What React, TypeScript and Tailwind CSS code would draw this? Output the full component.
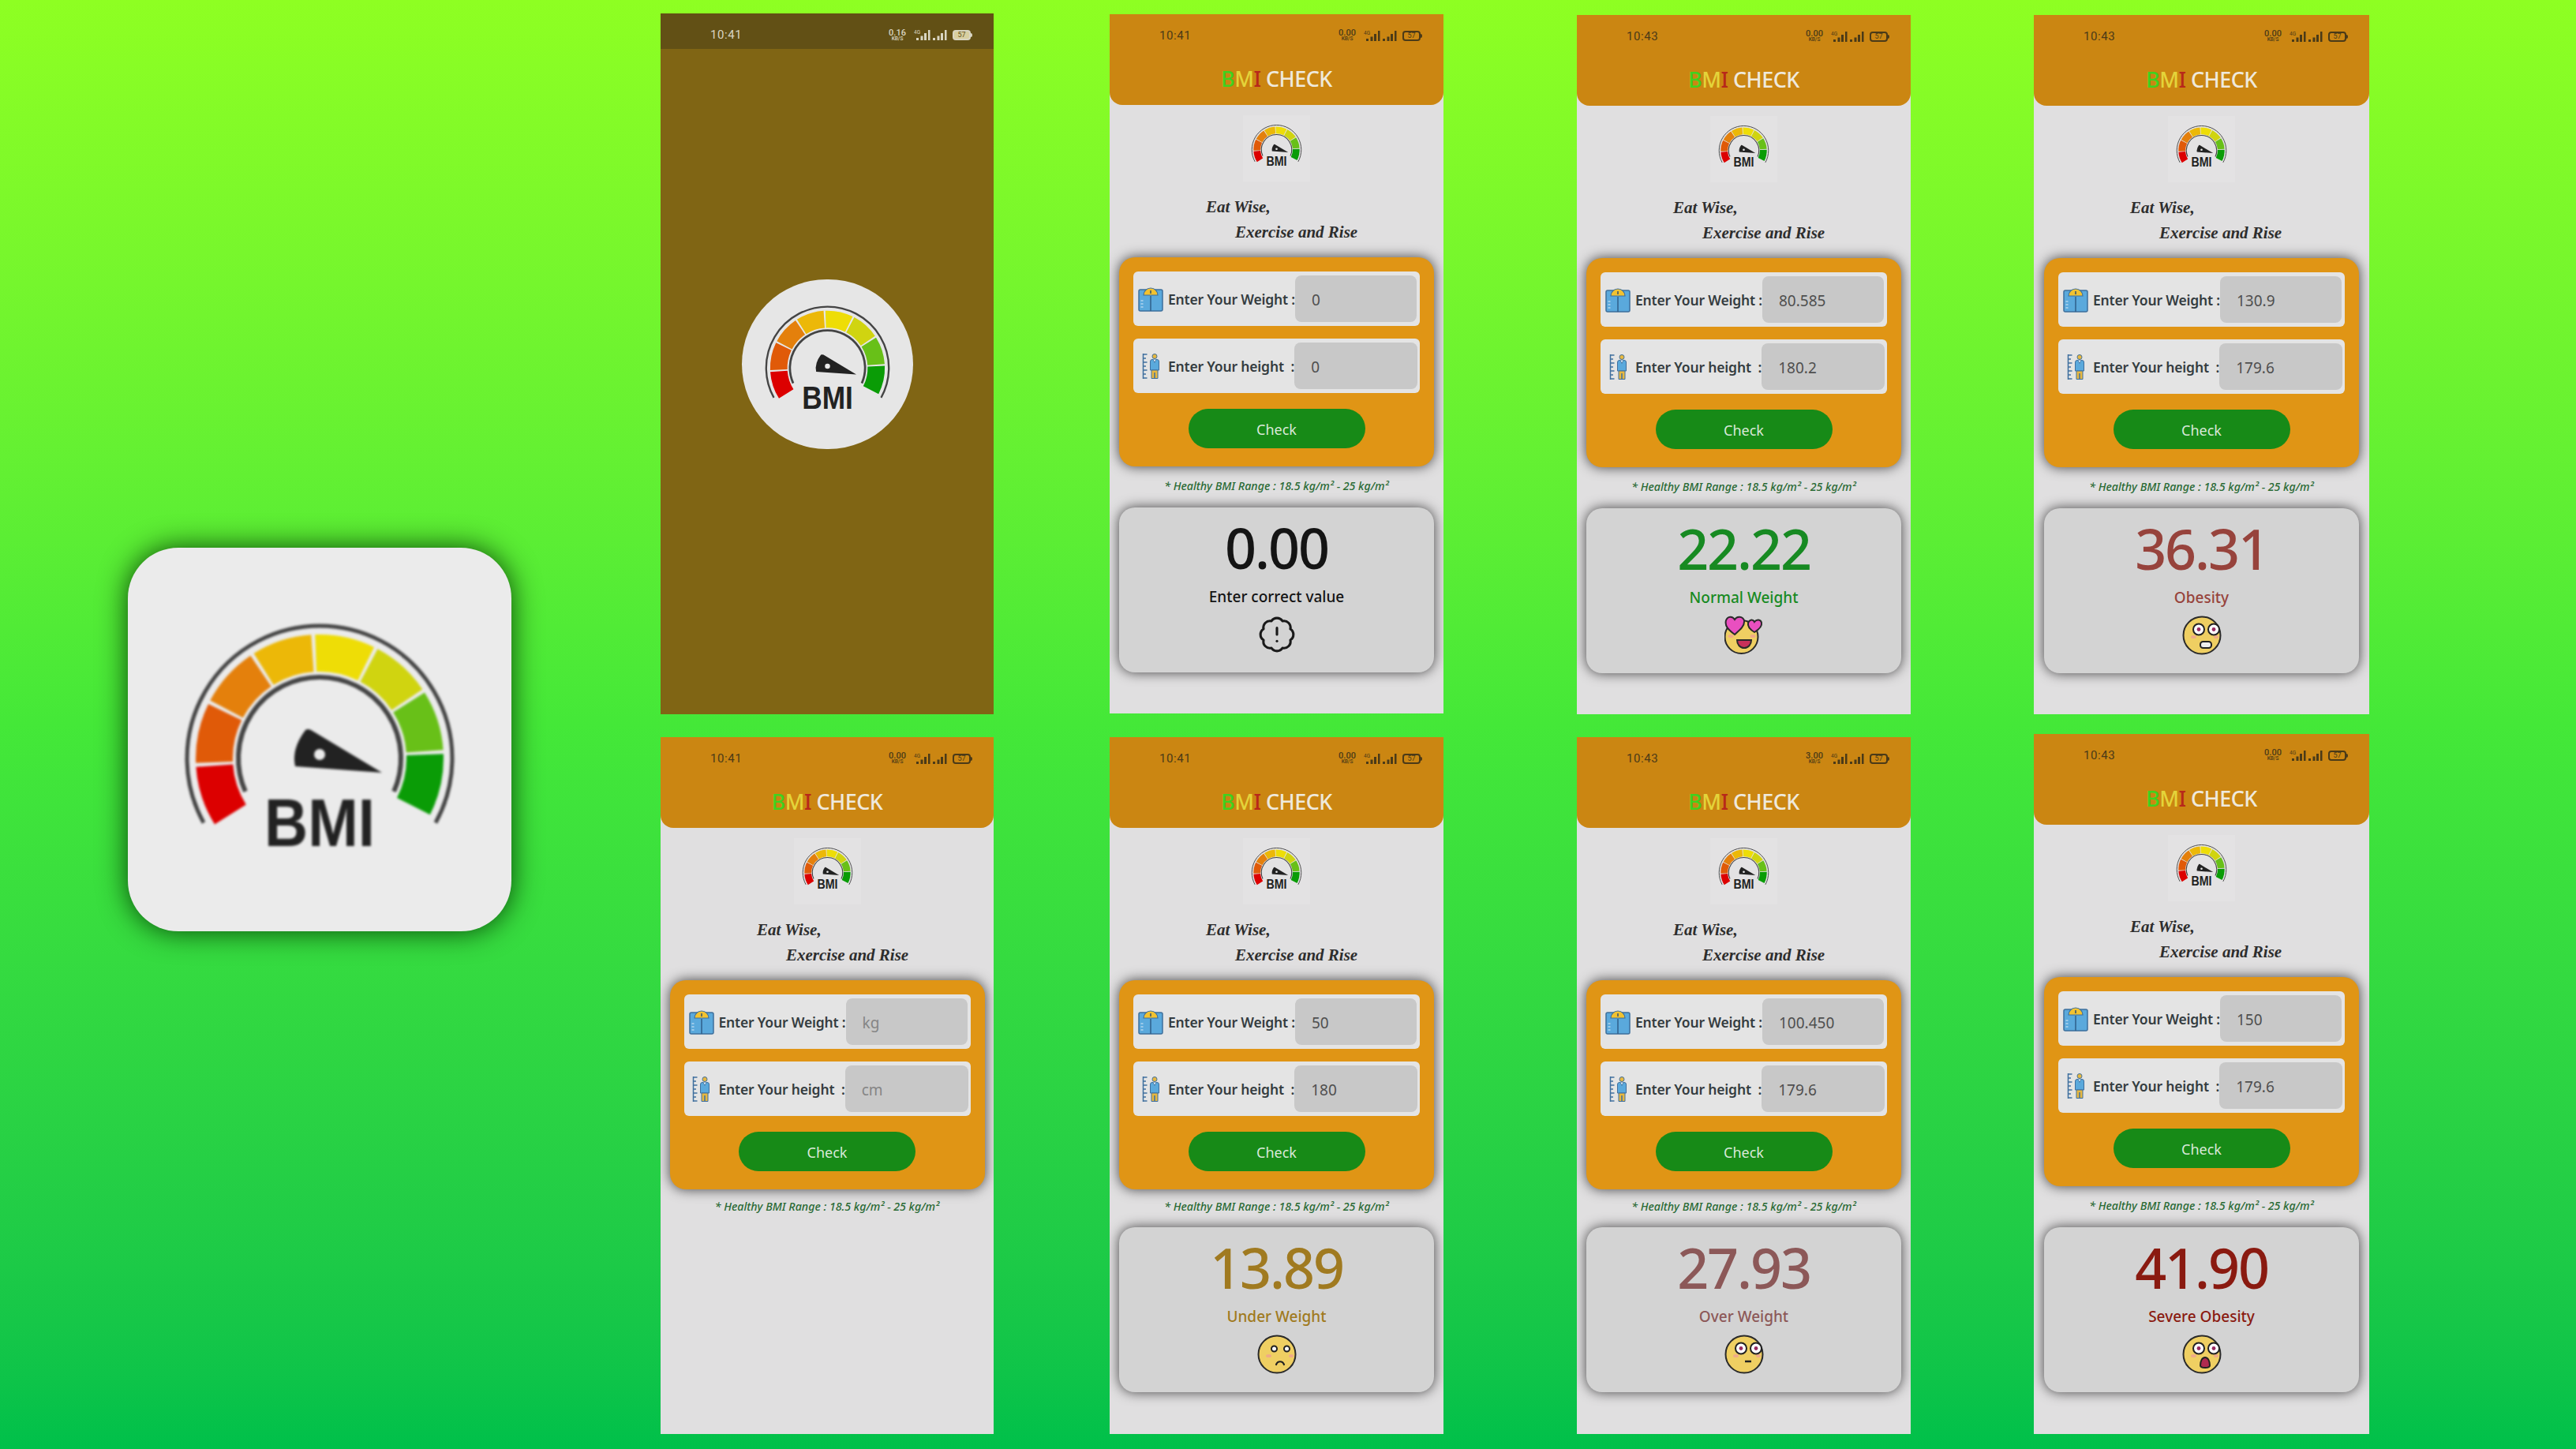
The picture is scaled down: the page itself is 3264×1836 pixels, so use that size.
import React from 'react';
import { BadgeAlert } from 'lucide-react';

const SEGMENTS = ['#0a9c06', '#68c018', '#d0d410', '#eedd06', '#ecb808', '#e4800c', '#e05a08', '#dc0000'];

const pt = (r: number, deg: number) => {
  const a = (deg * Math.PI) / 180;
  return `${(r * Math.cos(a)).toFixed(2)} ${(-r * Math.sin(a)).toFixed(2)}`;
};

const arc = (r: number, from: number, to: number) => `M${pt(r, from)} A${r} ${r} 0 ${to - from > 180 ? 1 : 0} 0 ${pt(r, to)}`;

const segment = (from: number, to: number) =>
  `M${pt(157, from)} A157 157 0 0 0 ${pt(157, to)} L${pt(110, to)} A110 110 0 0 1 ${pt(110, from)} Z`;

const Gauge: React.FC<{ className: string }> = ({ className }) => (
  <svg viewBox="-180 -180 360 320" className={className}>
    <path d={arc(168, -29, 209)} fill="none" stroke="#444444" strokeWidth="5" />
    <path d={arc(103, -24, 204)} fill="none" stroke="#444444" strokeWidth="6" />
    {SEGMENTS.map((color, i) => (
      <path key={color} d={segment(i * 30 - 27 + (i === 0 ? 0 : 0.9), i * 30 + 3 - 0.9)} fill={color} />
    ))}
    <path d="M79 18 L-31 10 Q-36 -12 -18 -36 Q-15 -38 -11 -36 Z" fill="#222222" />
    <circle cx="0" cy="-5" r="7" fill="#ebebeb" />
    <text x="0" y="111" textAnchor="middle" textLength="140" lengthAdjust="spacingAndGlyphs" fontFamily="Liberation Sans" fontWeight="700" fontSize="86" fill="#222222">
      BMI
    </text>
  </svg>
);

const ScaleIcon = () => (
  <svg viewBox="0 0 32 32" className="w-[32px] h-[32px] shrink-0">
    <rect x="1" y="4" width="30" height="27" rx="2" fill="#5aa9dc" stroke="#3d6f9c" strokeWidth="1.5" />
    <path d="M3.500 18h3M3.500 22h3M3.500 26h3" stroke="#dfeef8" strokeWidth="1.2" />
    <path d="M16 12V31" stroke="#2f5f8a" strokeWidth="1.5" />
    <path d="M7 11a9 9 0 0 1 18 0z" fill="#f2c230" stroke="#3d6f9c" strokeWidth="1.2" />
    <path d="M16 5v4" stroke="#33506b" strokeWidth="1.5" />
  </svg>
);

const HeightIcon = () => (
  <svg viewBox="0 0 23 32" className="w-[23px] h-[32px] shrink-0">
    <path d="M1.500 0v32M1.500 1h5M1.500 6h3.500M1.500 11h5M1.500 16h3.500M1.500 21h5M1.500 26h3.500M1.500 31h5" fill="none" stroke="#3f6f9e" strokeWidth="1.5" />
    <circle cx="16" cy="3.500" r="3" fill="#e8b840" stroke="#3f6f9e" strokeWidth="1" />
    <path d="M10.500 10a2.500 2.500 0 0 1 2.500-2.500h6a2.500 2.500 0 0 1 2.500 2.500v11h-11z" fill="#5aa9dc" stroke="#3f6f9e" strokeWidth="1" />
    <path d="M14 7.500l2 4 2-4" fill="#dfeef8" stroke="#3f6f9e" strokeWidth="0.8" />
    <path d="M12 21h8v10.500h-8z" fill="#e8b840" stroke="#3f6f9e" strokeWidth="1" />
    <path d="M16 24v8" stroke="#3f6f9e" strokeWidth="1.5" />
  </svg>
);

const WideEyes = () => (
  <>
    {[21, 40].map((cx) => (
      <g key={cx}>
        <circle cx={cx} cy="17.5" r="7" fill="#fff" stroke="#222" strokeWidth="2" />
        <circle cx={cx} cy="17.5" r="2.4" fill="#9a2a60" />
      </g>
    ))}
  </>
);

type Mood = 'alert' | 'love' | 'shock' | 'sad' | 'flat' | 'scream';

const LoveFace = () => (
  <svg viewBox="0 0 50 50" className="w-[50px] h-[50px]">
    <circle cx="21.5" cy="27" r="21" fill="#efcf62" stroke="#2a2a2a" strokeWidth="2" />
    <ellipse cx="8" cy="26" rx="3.500" ry="2" fill="#f0aa88" />
    <ellipse cx="36" cy="26" rx="3.500" ry="2" fill="#f0aa88" />
    <path d="M16 31h18c0 6-4 10-9 10s-9-4-9-10z" fill="#c8305a" stroke="#2a2a2a" strokeWidth="2" />
    <path d="M13 24C5 18 0 13 2 6c2-5 8-6 11-1 3-5 10-4 12 1 1 7-5 12-12 18z" fill="#e94fc0" stroke="#2a2a2a" strokeWidth="2" />
    <path d="M38 21c-5-3-9-7-8-12 2-4 6-5 8-1 3-4 8-3 9 1 1 5-4 9-9 12z" fill="#e94fc0" stroke="#2a2a2a" strokeWidth="2" />
  </svg>
);

const Face: React.FC<{ mood: Mood }> = ({ mood }) => {
  if (mood === 'alert') return <BadgeAlert className="w-[50px] h-[50px] text-[#1a1a1a]" strokeWidth={1.5} />;
  if (mood === 'love') return <LoveFace />;
  return (
    <svg viewBox="0 0 50 50" className="w-[50px] h-[50px]">
      <circle cx="25" cy="25" r="23.5" fill="#efcf62" stroke="#2a2a2a" strokeWidth="2" />
      <ellipse cx="14.5" cy="27" rx="3.500" ry="2" fill="#f0aa88" />
      <ellipse cx="43" cy="27" rx="3" ry="2" fill="#f0aa88" />
      {mood === 'shock' && (
        <>
          <WideEyes />
          <rect x="23" y="33" width="14" height="8" rx="3.500" fill="#eeeeee" stroke="#222" strokeWidth="2" />
        </>
      )}
      {mood === 'flat' && (
        <>
          <WideEyes />
          <path d="M26 34h8" stroke="#222" strokeWidth="2.500" />
        </>
      )}
      {mood === 'scream' && (
        <>
          <WideEyes />
          <path d="M29 29c-4 0-6 5-6 10 0 2 2 3 6 3s6-1 6-3c0-5-2-10-6-10z" fill="#b02a50" stroke="#222" strokeWidth="2" />
        </>
      )}
      {mood === 'sad' && (
        <>
          {[21.5, 37.5].map((cx) => (
            <g key={cx}>
              <circle cx={cx} cy="18" r="3.5" fill="#fff" stroke="#222" strokeWidth="2" />
            </g>
          ))}
          <path d="M24 38c2-5 8-5 10 0" fill="none" stroke="#222" strokeWidth="2.200" strokeLinecap="round" />
        </>
      )}
    </svg>
  );
};

const Signal: React.FC<{ tag?: boolean; color: string }> = ({ tag, color }) => (
  <svg viewBox={tag ? '0 0 22 15' : '3 0 18 15'} className={`${tag ? 'w-[22px]' : 'w-[18px]'} h-[15px]`}>
    {tag && (
      <text x="0" y="6" fontFamily="Roboto" fontSize="6.5" fill={color}>
        4G
      </text>
    )}
    <g fill={color}>
      <rect x="3" y="11" width="3" height="3" />
      <rect x="8.5" y="8.5" width="3" height="5.5" />
      <rect x="13" y="5" width="3" height="9" />
      <rect x="18" y="1" width="2.5" height="13" />
    </g>
  </svg>
);

const StatusBar: React.FC<{ time: string; kb: string; color: string; fill?: boolean }> = ({ time, kb, color, fill }) => (
  <div className="flex items-center justify-between w-full pl-[63px] pr-[27px]" style={{ color }}>
    <span className="text-[15px] tracking-[0.04em] font-['Roboto',sans-serif]">{time}</span>
    <div className="flex items-center">
      <div className="flex flex-col items-center w-[22px] leading-none font-['Roboto',sans-serif] font-medium mr-[10px]">
        <span className="text-[11px] leading-[9px]">{kb}</span>
        <span className="text-[6.5px] leading-[7px]">KB/S</span>
      </div>
      <Signal tag color={color} />
      <div className="w-[2px]" />
      <Signal color={color} />
      <div className="ml-[7px] flex items-center">
        <div
          className={`w-[23px] h-[13px] rounded-[4px] border-2 flex items-center justify-center text-[9px] leading-none font-['Roboto',sans-serif] ${fill ? 'bg-[#d8cfa0] text-[#625015]' : ''}`}
          style={{ borderColor: color }}
        >
          57
        </div>
        <div className="w-[2px] h-[5px] rounded-r-sm" style={{ backgroundColor: color }} />
      </div>
    </div>
  </div>
);

const Field: React.FC<{ icon: React.ReactNode; label: string; value: string; inset: string; placeholder?: boolean }> = ({ icon, label, value, inset, placeholder }) => (
  <div className="flex items-center h-[69px] bg-[#e4e4e4] rounded-[6px] pl-[5px] pr-[4px]">
    <div className="w-[34px] flex justify-center shrink-0">{icon}</div>
    <span className="ml-[5px] pt-[2px] text-[17.5px] font-semibold text-[#343c40] whitespace-pre tracking-[-0.01em]">{label}</span>
    <div className={`${inset} shrink-0 h-[59px] ml-auto bg-[#c8c8c8] rounded-[8px] flex items-center pl-[21px] pt-[3px] text-[19px] ${placeholder ? 'text-[#858585]' : 'text-[#4f4f4f]'}`}>
      {value}
    </div>
  </div>
);

type Result = { value: string; label: string; color: string; mood: Mood };

type PhoneProps = {
  width: string;
  height: string;
  time: string;
  kb: string;
  weight: string;
  height_: string;
  placeholder?: boolean;
  tight?: boolean;
  result?: Result;
};

const Phone: React.FC<PhoneProps> = ({ width, height, time, kb, weight, height_, placeholder, tight, result }) => (
  <div className={`${width} ${height} bg-[#e0dfe0] flex flex-col items-center font-['Noto_Sans',sans-serif] overflow-hidden`}>
    <div className="w-full h-[115px] bg-[#cb8612] rounded-b-[16px] shrink-0 flex flex-col">
      <div className="h-[54px] flex items-center">
        <StatusBar time={time} kb={kb} color="#4a3a18" />
      </div>
      <div className="text-center text-[27px] leading-[56px] font-medium tracking-[-0.02em] text-[#efe9dc]">
        <span className="text-[#3fd21f]">B</span>
        <span className="text-[#e4d43a]">M</span>
        <span className="text-[#b8281a]">I</span> CHECK
      </div>
    </div>
    <div className="mt-[13px] w-[85px] h-[84px] bg-[#e3e2e3] flex justify-center pt-[10px] shrink-0">
      <Gauge className="w-[67px] h-[60px]" />
    </div>
    <div className="w-full h-[64px] mt-[16px] mb-[16px] pl-[122px] font-['Liberation_Serif',serif] font-bold italic text-[21px] leading-[32px] text-[#2d2d2d] shrink-0">
      <div>Eat Wise,</div>
      <div className="pl-[37px] whitespace-nowrap">Exercise and Rise</div>
    </div>
    <div className="w-[399px] h-[265px] bg-[#e09515] rounded-[20px] shadow-[0_0_16px_rgba(0,0,0,0.7)] shrink-0 px-[18px] pt-[18px] flex flex-col gap-[16px]">
      <Field icon={<ScaleIcon />} label="Enter Your Weight :" value={weight} inset="w-[154px]" placeholder={placeholder} />
      <Field icon={<HeightIcon />} label="Enter Your height  :" value={height_} inset="w-[156px]" placeholder={placeholder} />
      <button className="mx-auto mt-[4px] pt-[2px] w-[224px] h-[50px] rounded-full bg-[#178a17] text-[#d9e9d9] text-[18px]">Check</button>
    </div>
    <div className={`${tight ? 'mt-[12px]' : 'mt-[15px]'} h-[20px] leading-[20px] italic text-[#2a6a35] text-[14.2px] font-medium whitespace-nowrap shrink-0`}>
      * Healthy BMI Range : 18.5 kg/m² - 25 kg/m²
    </div>
    {result && (
      <div className={`${tight ? 'mt-[16px]' : 'mt-[17px]'} w-[399px] h-[209px] bg-[#d3d3d3] rounded-[20px] shadow-[0_0_16px_rgba(0,0,0,0.7)] shrink-0 flex flex-col items-center pt-[16px]`} style={{ color: result.color }}>
        <div className="text-[70px] leading-[70px] font-medium tracking-[-0.03em]">{result.value}</div>
        <div className="mt-[15px] text-[19px] leading-[24px] font-medium">{result.label}</div>
        <div className="mt-[11px]">
          <Face mood={result.mood} />
        </div>
      </div>
    )}
  </div>
);

const Splash = () => (
  <div className="w-[422px] h-[888px] bg-[#806514] flex flex-col items-center">
    <div className="w-full h-[45px] bg-[#625015] flex items-center pt-[10px] shrink-0">
      <StatusBar time="10:41" kb="0.16" color="#d9d5c2" fill />
    </div>
    <div className="mt-[292px] w-[217px] h-[215px] rounded-full bg-[#e6e6e6] flex justify-center pt-[29px]">
      <Gauge className="w-[167px] h-[148px]" />
    </div>
  </div>
);

export default function App() {
  return (
    <div className="w-[3264px] h-[1836px] overflow-hidden flex items-start bg-gradient-to-b from-[#8eff22] via-[#44e838] to-[#00c04a]">
      <div className="w-[837px] shrink-0 pl-[162px] pt-[694px]">
        <div className="w-[486px] h-[486px] rounded-[64px] bg-[#ebebeb] shadow-[0_0_36px_rgba(0,50,0,0.9)] flex justify-center pt-[87px]">
          <Gauge className="w-[360px] h-[320px] blur-[1.5px]" />
        </div>
      </div>

      <div className="flex flex-col pt-[17px] gap-[29px] shrink-0">
        <Splash />
        <Phone width="w-[422px]" height="h-[883px]" time="10:41" kb="0.00" weight="kg" height_="cm" placeholder tight />
      </div>

      <div className="ml-[147px] flex flex-col pt-[18px] gap-[30px] shrink-0">
        <Phone width="w-[423px]" height="h-[886px]" time="10:41" kb="0.00" weight="0" height_="0" result={{ value: '0.00', label: 'Enter correct value', color: '#141414', mood: 'alert' }} />
        <Phone width="w-[423px]" height="h-[883px]" time="10:41" kb="0.00" weight="50" height_="180" tight result={{ value: '13.89', label: 'Under Weight', color: '#a07a20', mood: 'sad' }} />
      </div>

      <div className="ml-[169px] flex flex-col pt-[19px] gap-[29px] shrink-0">
        <Phone width="w-[423px]" height="h-[886px]" time="10:43" kb="0.00" weight="80.585" height_="180.2" result={{ value: '22.22', label: 'Normal Weight', color: '#178a22', mood: 'love' }} />
        <Phone width="w-[423px]" height="h-[883px]" time="10:43" kb="3.00" weight="100.450" height_="179.6" tight result={{ value: '27.93', label: 'Over Weight', color: '#8c5858', mood: 'flat' }} />
      </div>

      <div className="ml-[156px] flex flex-col pt-[19px] gap-[25px] shrink-0">
        <Phone width="w-[425px]" height="h-[886px]" time="10:43" kb="0.00" weight="130.9" height_="179.6" result={{ value: '36.31', label: 'Obesity', color: '#97433c', mood: 'shock' }} />
        <Phone width="w-[425px]" height="h-[887px]" time="10:43" kb="0.00" weight="150" height_="179.6" result={{ value: '41.90', label: 'Severe Obesity', color: '#8a1a10', mood: 'scream' }} />
      </div>
    </div>
  );
}
